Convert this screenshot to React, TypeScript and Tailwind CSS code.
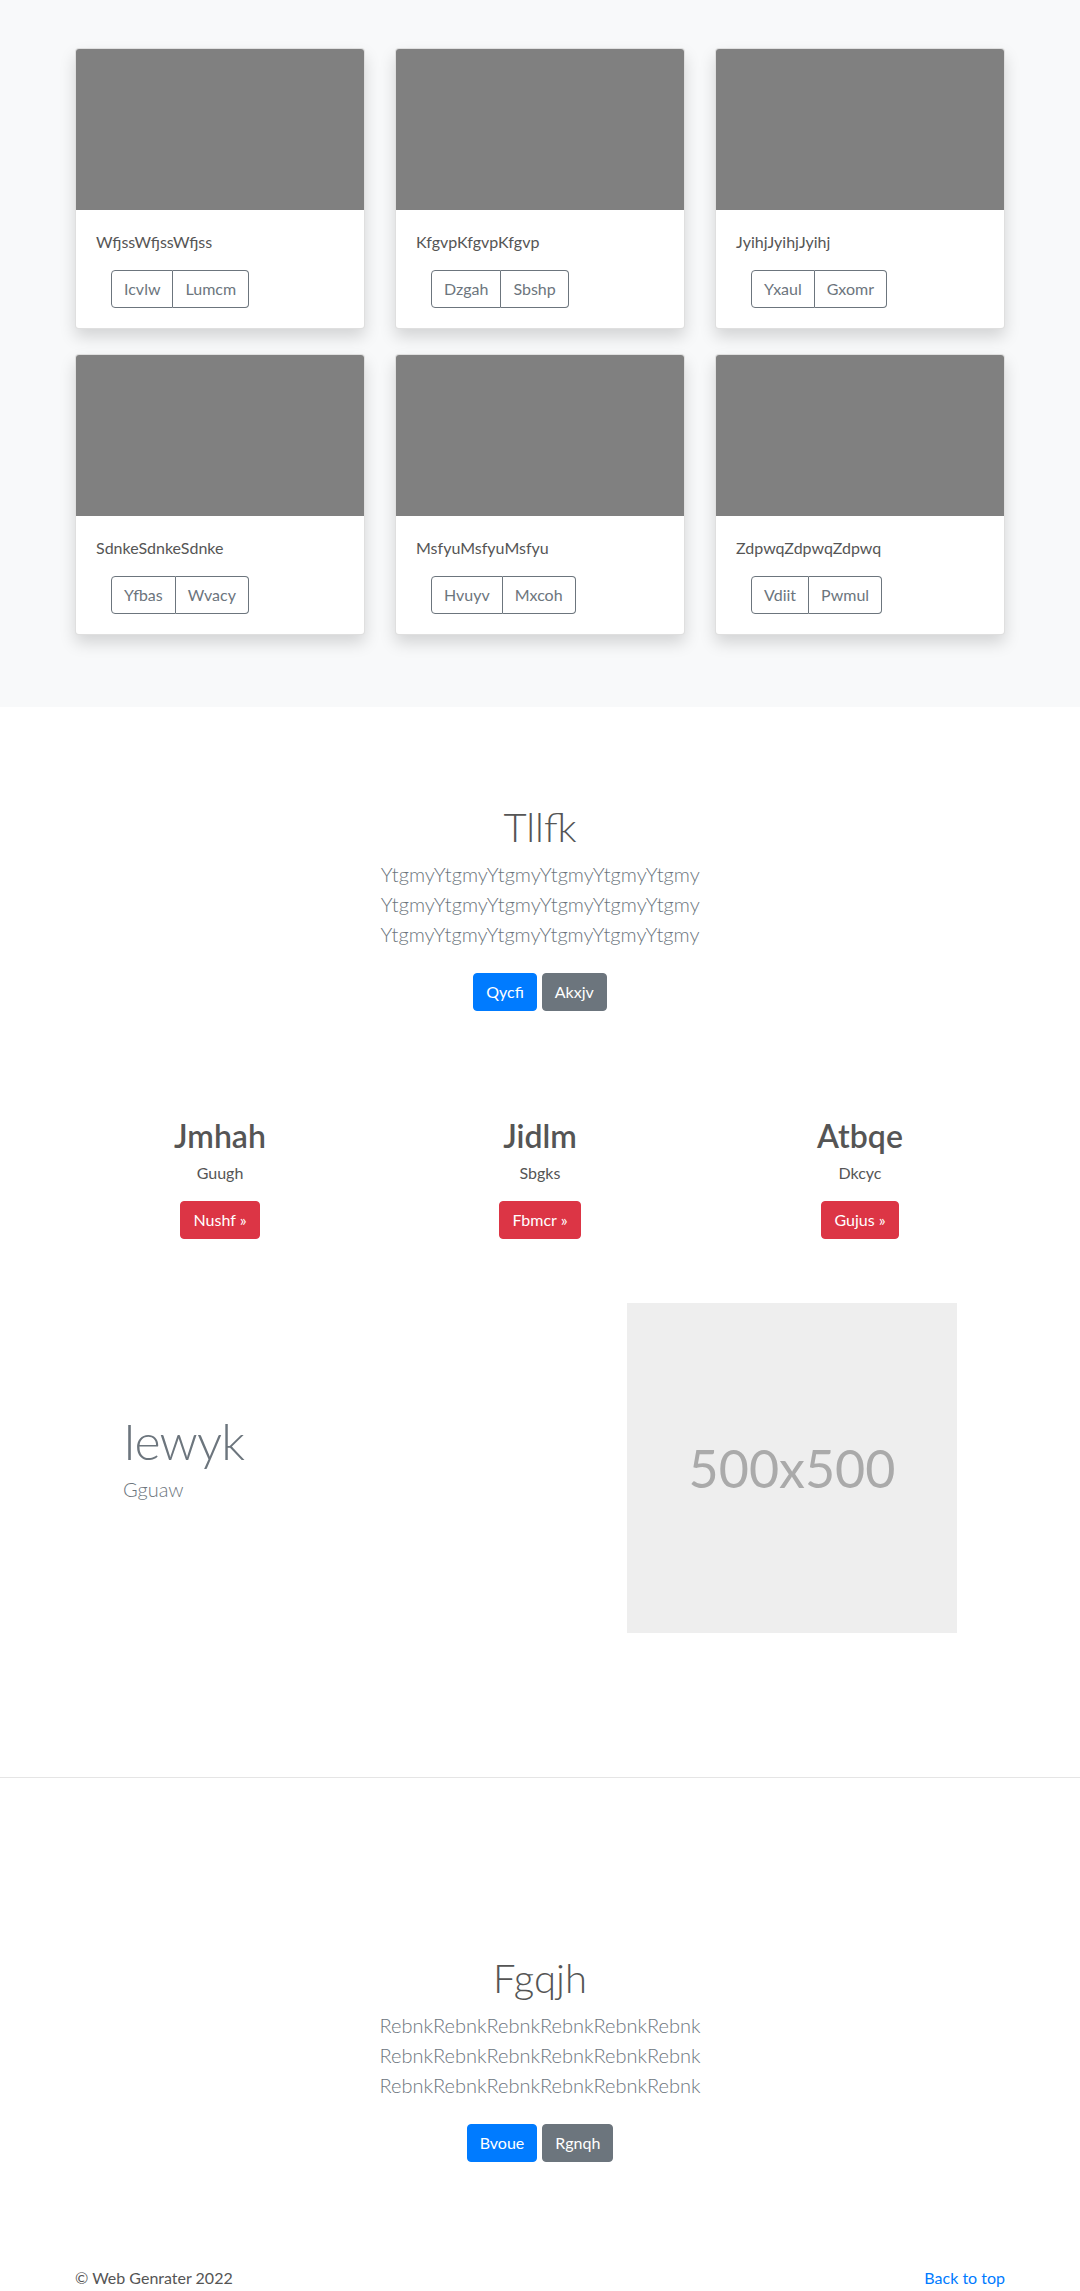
import React from "react";

const cards = [
  { text: "WfjssWfjssWfjss", a: "Icvlw", b: "Lumcm" },
  { text: "KfgvpKfgvpKfgvp", a: "Dzgah", b: "Sbshp" },
  { text: "JyihjJyihjJyihj", a: "Yxaul", b: "Gxomr" },
  { text: "SdnkeSdnkeSdnke", a: "Yfbas", b: "Wvacy" },
  { text: "MsfyuMsfyuMsfyu", a: "Hvuyv", b: "Mxcoh" },
  { text: "ZdpwqZdpwqZdpwq", a: "Vdiit", b: "Pwmul" },
];

const features = [
  { title: "Jmhah", text: "Guugh", btn: "Nushf" },
  { title: "Jidlm", text: "Sbgks", btn: "Fbmcr" },
  { title: "Atbqe", text: "Dkcyc", btn: "Gujus" },
];

const Hero = ({ title, word, primary, secondary }: { title: string; word: string; primary: string; secondary: string }) => (
  <section className="bg-white text-center pt-[96px] pb-[96px]">
    <div className="w-[960px] mx-auto px-[15px]">
      <h1 className="text-[40px] leading-[48px] font-light text-[#555] mb-2">{title}</h1>
      <p className="text-[20px] leading-[30px] font-light text-[#6c757d] max-w-[380px] mx-auto mb-4">
        {word} {word} {word}
      </p>
      <div className="flex justify-center gap-[5px] py-2">
        <a href="#" className="px-3 py-[6px] text-base leading-6 border border-[#007bff] bg-[#007bff] text-white rounded">
          {primary}
        </a>
        <a href="#" className="px-3 py-[6px] text-base leading-6 border border-[#6c757d] bg-[#6c757d] text-white rounded">
          {secondary}
        </a>
      </div>
    </div>
  </section>
);

export default function App() {
  return (
    <div className="[font-family:Lato,'Noto_Sans',sans-serif] text-[#555] bg-white">
      {/* Album cards */}
      <section className="bg-[#f8f9fa] pt-12 pb-[72px]">
        <div className="w-[960px] mx-auto px-[15px] grid grid-cols-3 gap-x-[30px] gap-y-[25px]">
          {cards.map((c) => (
            <div key={c.text} className="bg-white border border-black/[0.125] rounded overflow-hidden shadow-[0_8px_16px_rgba(0,0,0,0.15)]">
              <div className="h-[161px] bg-[#808080]" />
              <div className="p-5">
                <p className="text-base leading-6 mb-4">{c.text}</p>
                <div className="ml-[15px] flex">
                  <button className="px-3 py-[6px] text-base leading-6 text-[#6c757d] border border-[#6c757d] rounded-l">{c.a}</button>
                  <button className="px-3 py-[6px] text-base leading-6 text-[#6c757d] border border-l-0 border-[#6c757d] rounded-r">{c.b}</button>
                </div>
              </div>
            </div>
          ))}
        </div>
      </section>

      <Hero title="Tllfk" word="YtgmyYtgmyYtgmyYtgmyYtgmyYtgmy" primary="Qycfi" secondary="Akxjv" />

      {/* Marketing columns */}
      <section>
        <div className="w-[960px] mx-auto grid grid-cols-3 text-center">
          {features.map((f) => (
            <div key={f.title} className="px-[15px]">
              <h2 className="text-[32px] leading-[38px] font-semibold text-[#555] pt-[2px] mb-[6px]">{f.title}</h2>
              <p className="text-base leading-6 mb-4">{f.text}</p>
              <p className="mb-4">
                <a href="#" className="inline-block px-3 py-[6px] text-base leading-6 bg-[#dc3545] border border-[#dc3545] text-white rounded">
                  {f.btn} »
                </a>
              </p>
            </div>
          ))}
        </div>
      </section>

      {/* Featurette */}
      <section className="pt-12 pb-[144px]">
        <div className="w-[960px] mx-auto px-[15px]">
          <div className="px-12 flex items-center justify-between">
            <div>
              <h2 className="text-[50px] leading-none font-light tracking-[-0.8px] text-[#6c757d] mb-2">Iewyk</h2>
              <p className="text-[20px] leading-[30px] font-light text-[#6c757d] mb-4">Gguaw</p>
            </div>
            <div className="w-[330px] h-[330px] bg-[#eeeeee] flex items-center justify-center text-[52px] text-[#aaaaaa]">
              500x500
            </div>
          </div>
        </div>
      </section>

      <hr className="border-0 border-t border-black/10 mb-20" />

      <Hero title="Fgqjh" word="RebnkRebnkRebnkRebnkRebnkRebnk" primary="Bvoue" secondary="Rgnqh" />

      <footer>
        <div className="w-[960px] mx-auto px-[15px] flex justify-between text-base leading-6">
          <p>© Web Genrater 2022</p>
          <a href="#" className="text-[#007bff]">Back to top</a>
        </div>
      </footer>
    </div>
  );
}
